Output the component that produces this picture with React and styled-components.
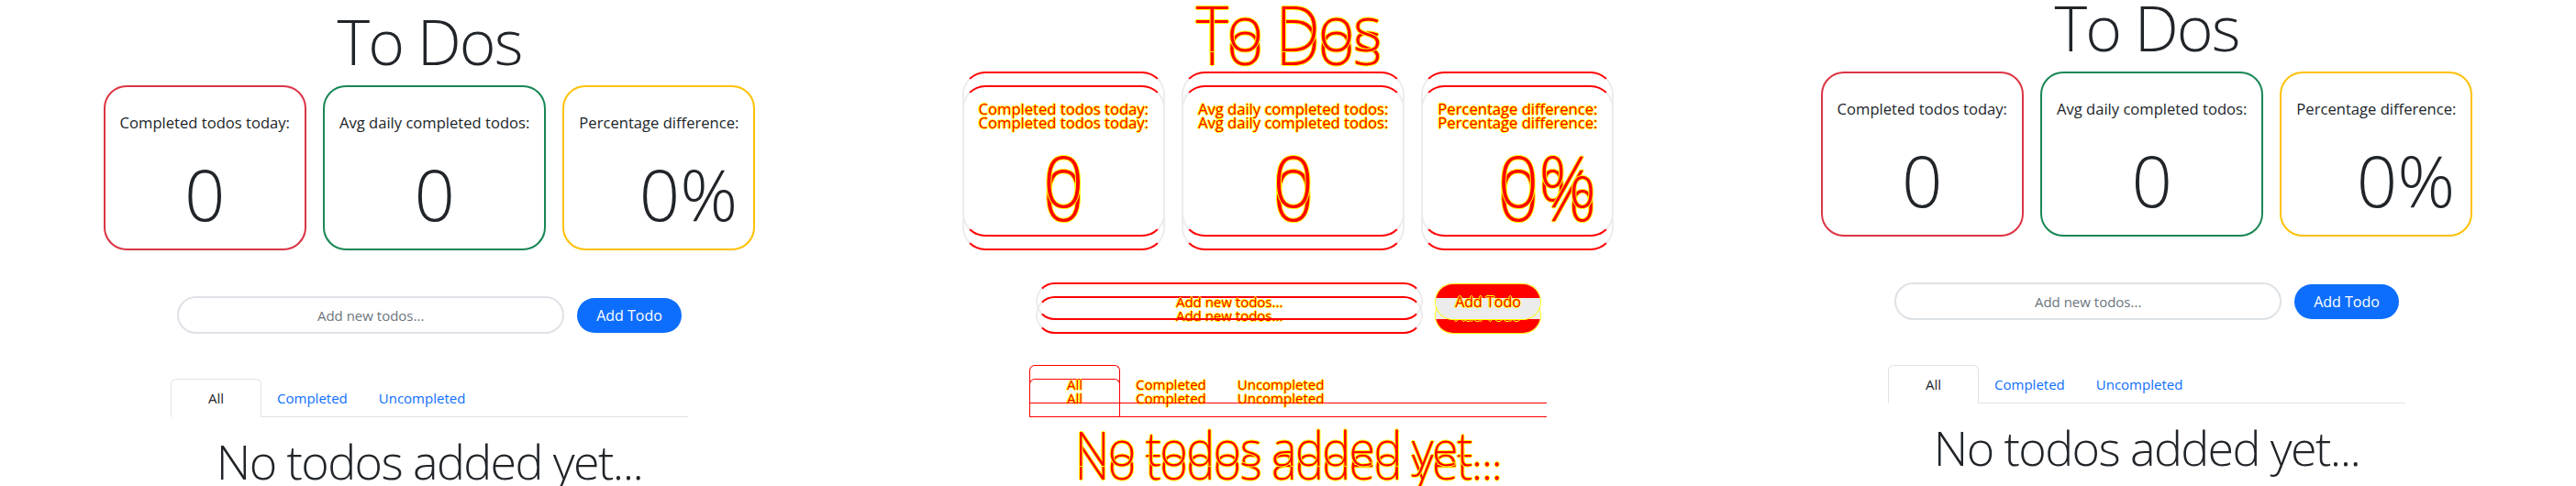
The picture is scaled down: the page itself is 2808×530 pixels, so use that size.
import React from 'react'
import styled, { createGlobalStyle, ThemeProvider, css } from 'styled-components'

// colours used by the visual diff panel in the middle
const RED = '#ff0000'
const YELLOW = '#ffff00'
const SAME = '#ececec'

const diffText = css`
  color: ${RED};
  text-shadow: 1px 0 ${YELLOW}, -1px 0 ${YELLOW}, 0 1px ${YELLOW}, 0 -1px ${YELLOW};
`

const GlobalStyle = createGlobalStyle`
  body {
    margin: 0;
    background: #fff;
  }
  * {
    box-sizing: border-box;
  }
`

const Board = styled.div`
  display: grid;
  grid-template-columns: repeat(3, 936px);
  width: 2808px;
  height: 530px;
  overflow: hidden;
`

const Panel = styled.div`
  position: relative;
  height: 530px;
  overflow: hidden;
`

const Overlay = styled.div`
  position: absolute;
  inset: 0;
`

const Page = styled.div`
  display: flex;
  flex-direction: column;
  align-items: center;
  padding-top: ${p => p.$top}px;
  font-family: "Open Sans", "Liberation Sans", sans-serif;
  color: #212529;
  ${p => p.theme.diff && diffText}
`

const Title = styled.h1`
  margin: -4px 0 0;
  font-size: 68px;
  font-weight: 300;
  line-height: 1;
  letter-spacing: -2px;
`

const CardRow = styled.div`
  display: flex;
  gap: 18px;
  margin-top: 14px;
`

const Card = styled.div`
  height: 180px;
  padding: 27px 16px 0;
  border: 2px solid ${p => p.$tone};
  border-radius: 25px;
  text-align: center;
  ${p => p.theme.diff && css`
    border-color: ${RED} ${SAME};
  `}
`

const Label = styled.p`
  margin: 0;
  font-size: 16.6px;
  line-height: 1.5;
  white-space: nowrap;
`

const Value = styled.div`
  margin-top: 25px;
  padding-left: ${p => p.$nudge || 0}px;
  font-size: 78px;
  font-weight: 300;
  line-height: 1;
`

const InputRow = styled.div`
  display: flex;
  align-items: center;
  gap: 14px;
  margin-top: 50px;
`

const TodoInput = styled.input`
  width: 422px;
  height: 41px;
  border: 2px solid #dee2e6;
  border-radius: 999px;
  background: #fff;
  font-family: inherit;
  font-size: 15px;
  text-align: center;
  outline: none;

  &::placeholder {
    color: #6c757d;
    opacity: 1;
  }

  ${p => p.theme.diff && css`
    background: transparent;
    border-color: ${RED} ${SAME};
    &::placeholder {
      ${diffText}
    }
  `}
`

const AddButton = styled.button`
  height: 38px;
  padding: 0 21px;
  border: none;
  border-radius: 999px;
  background: #0d6efd;
  color: #fff;
  font-family: inherit;
  font-size: 16px;

  ${p => p.theme.diff && css`
    ${diffText}
    background: ${p.theme.upper
      ? `linear-gradient(${RED} 15px, ${SAME} 15px)`
      : `linear-gradient(${SAME} calc(100% - 15px), ${RED} calc(100% - 15px))`};
    box-shadow: 0 0 0 1px ${YELLOW};
  `}
`

const Tabs = styled.nav`
  display: flex;
  width: 564px;
  margin-top: 49px;
  border-bottom: 1px solid ${p => (p.theme.diff ? RED : '#dee2e6')};
`

const Tab = styled.span`
  margin-bottom: -1px;
  padding: 8px ${p => (p.$wide ? 40 : 16)}px;
  border: 1px solid transparent;
  border-radius: 6px 6px 0 0;
  font-size: 15px;
  line-height: 24px;
  color: ${p => (p.$active ? '#212529' : '#0d6efd')};

  ${p => p.$active && css`
    border-color: #dee2e6 #dee2e6 #fff;
    background: #fff;
  `}

  ${p => p.theme.diff && css`
    ${diffText}
    background: transparent;
    border-color: ${p.$active ? `${RED} ${RED} transparent` : 'transparent'};
  `}
`

const Empty = styled.p`
  margin: 17px 0 0;
  font-size: 52px;
  font-weight: 300;
  line-height: 1.2;
  letter-spacing: -1.6px;
  white-space: nowrap;
`

const stats = [
  { label: 'Completed todos today:', value: '0', tone: '#dc3545' },
  { label: 'Avg daily completed todos:', value: '0', tone: '#198754' },
  { label: 'Percentage difference:', value: '0%', tone: '#ffc107', nudge: 64 },
]

const Screen = ({ top }) => (
  <Page $top={top}>
    <Title>To Dos</Title>
    <CardRow>
      {stats.map(s => (
        <Card key={s.label} $tone={s.tone}>
          <Label>{s.label}</Label>
          <Value $nudge={s.nudge}>{s.value}</Value>
        </Card>
      ))}
    </CardRow>
    <InputRow>
      <TodoInput placeholder="Add new todos..." />
      <AddButton>Add Todo</AddButton>
    </InputRow>
    <Tabs>
      <Tab $active $wide>All</Tab>
      <Tab>Completed</Tab>
      <Tab>Uncompleted</Tab>
    </Tabs>
    <Empty>No todos added yet...</Empty>
  </Page>
)

export default function App() {
  return (
    <>
      <GlobalStyle />
      <Board>
        <Panel>
          <Screen top={15} />
        </Panel>
        <Panel>
          <ThemeProvider theme={{ diff: true, upper: false }}>
            <Screen top={15} />
          </ThemeProvider>
          <Overlay>
            <ThemeProvider theme={{ diff: true, upper: true }}>
              <Screen top={0} />
            </ThemeProvider>
          </Overlay>
        </Panel>
        <Panel>
          <Screen top={0} />
        </Panel>
      </Board>
    </>
  )
}
